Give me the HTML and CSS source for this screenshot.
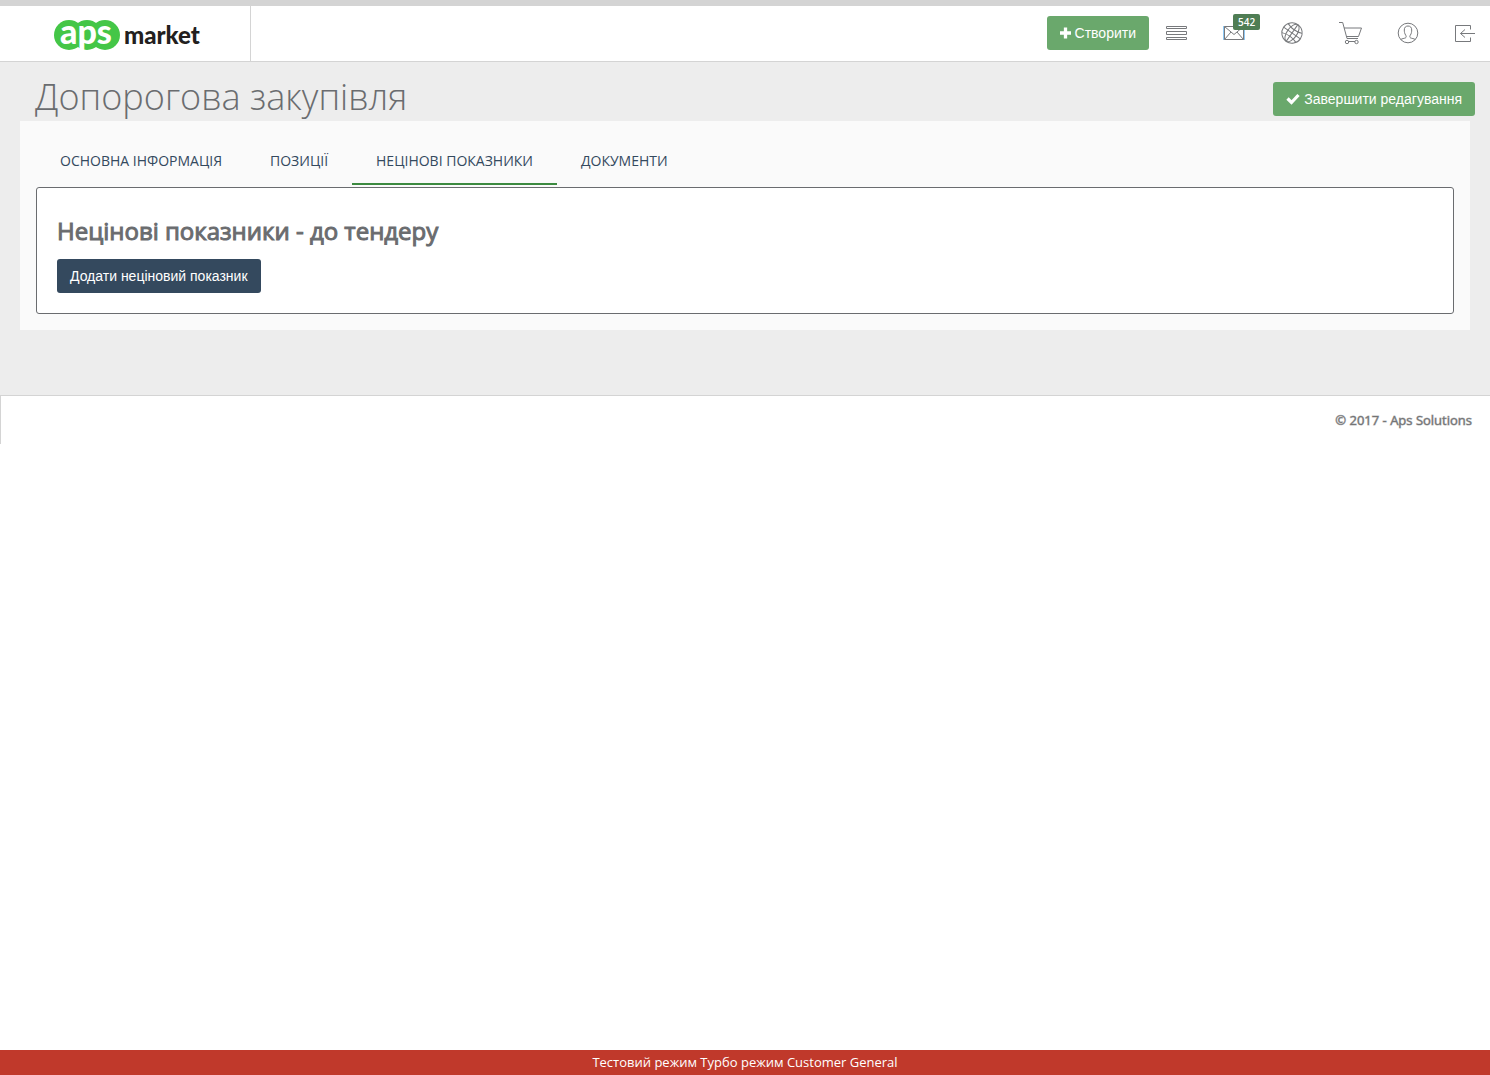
FILE: index.html
```html
<!DOCTYPE html>
<html lang="uk">
<head>
<meta charset="utf-8">
<title>Допорогова закупівля</title>
<link rel="stylesheet" href="styles.css">
</head>
<body>
<header class="header">
  <a class="brand" href="#" aria-label="aps market">
    <svg class="logo" width="150" height="48" viewBox="0 -9 150 48">
      <g fill="#44c647"><circle cx="17" cy="17" r="15"/><circle cx="35" cy="17" r="15"/><circle cx="53" cy="17" r="15"/></g>
      <text class="logo-aps" x="8" y="26">aps</text>
      <text class="logo-market" x="72" y="26">market</text>
    </svg>
  </a>
  <nav class="tools">
    <button class="btn btn-green" type="button"><svg width="11" height="12" viewBox="0 0 12 12"><path d="M4.2 0h3.6v4.2H12v3.6H7.8V12H4.2V7.8H0V4.2h4.2z" fill="#fff"/></svg> Створити</button>
    <a class="tool" href="#" aria-label="Список">
      <svg width="24" height="24" viewBox="0 0 24 24"><path d="M2.5 5.500h20v2h-20zM2.500 10.500h20v3h-20zM2.500 16.500h20v2h-20z"/></svg>
    </a>
    <a class="tool" href="#" aria-label="Повідомлення">
      <svg width="24" height="24" viewBox="0 0 24 24"><path class="mail-edge" d="M1.500 5v14M22.500 5v14"/><path d="M2.500 5.500h19v13h-19zM2.500 5.500l9.500 8 9.500-8M2.500 18.500l6.500-7.500M21.500 18.500L15 11"/></svg>
      <span class="badge">542</span>
    </a>
    <a class="tool" href="#" aria-label="Мова">
      <svg width="24" height="24" viewBox="0 0 24 24"><g transform="rotate(35 12 12)"><circle cx="12" cy="12" r="10.200"/><ellipse cx="12" cy="12" rx="5" ry="10.200"/><path d="M12 1.800v20.400M1.800 12h20.400M3.500 6.500c5 2 12 2 17 0M3.500 17.500c5-2 12-2 17 0"/></g></svg>
    </a>
    <a class="tool" href="#" aria-label="Кошик">
      <svg width="24" height="24" viewBox="0 0 24 24"><path d="M1 1.500h3.700L9 17.500h11M6 7h17.500l-3 8.500H8.500"/><circle cx="9" cy="21" r="1.700"/><circle cx="18.500" cy="21" r="1.700"/><path d="M10.500 20.500H17"/></svg>
    </a>
    <a class="tool" href="#" aria-label="Профіль">
      <svg width="24" height="24" viewBox="0 0 24 24"><circle cx="12" cy="12" r="9.800"/><path d="M4.800 18.500c1.200-.9 3.500-1.100 4.500-1.500 1.200-.5 1-2 .4-2.800C8.500 12.500 8.300 10.500 8.300 9c0-2.500 1.300-4 3.700-4s3.700 1.500 3.700 4c0 1.500-.2 3.500-1.400 5.200-.6.8-.8 2.300.4 2.800 1 .4 3.300.6 4.500 1.500"/></svg>
    </a>
    <a class="tool" href="#" aria-label="Вийти">
      <svg width="24" height="24" viewBox="0 0 24 24"><path d="M16.500 8.500v-4h-15v16h15v-4M21 12.500H6.500M11 8.500l-4.500 4 4.500 4"/></svg>
    </a>
  </nav>
</header>
<main class="page">
  <div class="page-head">
    <h1 class="title">Допорогова закупівля</h1>
    <button class="btn btn-green" type="button"><svg width="14" height="12" viewBox="0 0 14 12"><path d="M1.500 5.500l4 4L12.500 2" fill="none" stroke="#fff" stroke-width="3.200"/></svg> Завершити редагування</button>
  </div>
  <div class="panel">
    <nav class="tabs">
      <a class="tab" href="#">ОСНОВНА ІНФОРМАЦІЯ</a>
      <a class="tab" href="#">ПОЗИЦІЇ</a>
      <a class="tab tab-active" href="#" aria-current="page">НЕЦІНОВІ ПОКАЗНИКИ</a>
      <a class="tab" href="#">ДОКУМЕНТИ</a>
    </nav>
    <section class="box">
      <h2 class="subtitle">Нецінові показники - до тендеру</h2>
      <button class="btn btn-dark" type="button">Додати неціновий показник</button>
    </section>
  </div>
</main>
<footer class="footer">© 2017 - Aps Solutions</footer>
<div class="mode-bar">Тестовий режим Турбо режим Customer General</div>
</body>
</html>
```
FILE: styles.css
```css
* { box-sizing: border-box; }
body {
  margin: 0;
  background: #fff;
  color: #6a6c6f;
  font: 13px/18px "Open Sans", sans-serif;
}
.header {
  display: flex;
  justify-content: space-between;
  height: 62px;
  border-top: 6px solid #d4d4d4;
  border-bottom: 1px solid #d4d4d4;
}
.brand {
  display: flex;
  justify-content: center;
  width: 251px;
  padding-top: 3px;
  border-right: 1px solid #d4d4d4;
}
.logo { margin-left: 4px; }
.logo-aps { font: 900 34px Lato, sans-serif; fill: #fff; }
.logo-market { font: 900 24px Lato, sans-serif; fill: #231f20; }
.tools {
  display: flex;
  align-items: center;
  padding: 0 12px 2px 0;
}
.tool {
  position: relative;
  display: flex;
  margin-left: 34px;
}
.btn + .tool { margin-left: 15px; }
.tool svg {
  fill: none;
  stroke: #77797c;
  stroke-width: 1;
}
.tool .mail-edge { stroke: #8ec8f4; }
.badge {
  position: absolute;
  top: -7px;
  left: 11px;
  padding: 0 5px;
  border-radius: 2px;
  background: #4f7d54;
  color: #fff;
  font-size: 10px;
  font-weight: 600;
  line-height: 16px;
}
.btn {
  height: 34px;
  padding: 0 13px;
  border: 0;
  border-radius: 3px;
  color: #fff;
  font: 14px/20px "Liberation Sans", Arial, sans-serif;
  white-space: nowrap;
}
.btn svg { vertical-align: -1px; }
.btn-green { background: #6aa86c; }
.btn-dark { background: #34495e; }
.page {
  padding: 13px 20px 65px;
  background: #ededed;
}
.page-head {
  display: flex;
  justify-content: space-between;
  align-items: flex-start;
  height: 46px;
  padding-left: 15px;
}
.page-head .btn { margin: 7px -5px 0 0; }
.title {
  margin: 0;
  font-size: 36px;
  font-weight: 300;
  line-height: 44px;
}
.panel {
  padding: 16px;
  background: #fafafa;
}
.tabs {
  display: flex;
  margin-bottom: 2px;
}
.tab {
  padding: 15px 24px 13px;
  border-bottom: 2px solid transparent;
  color: #34495e;
  font-size: 14px;
  line-height: 18px;
  text-decoration: none;
}
.tab-active { border-color: #3c8a40; }
.box {
  padding: 26px 20px 20px;
  border: 1px solid #6a6c6f;
  border-radius: 3px;
  background: #fff;
}
.subtitle {
  margin: 0 0 11px;
  font-size: 24px;
  font-weight: 400;
  line-height: 34px;
  -webkit-text-stroke: 1px #6a6c6f;
}
.footer {
  height: 49px;
  padding: 15px 18px;
  border-top: 1px solid #d4d4d4;
  border-left: 1px solid #d4d4d4;
  text-align: right;
  -webkit-text-stroke: 1px #7c7c7c88;
}
.mode-bar {
  position: fixed;
  right: 0;
  bottom: 0;
  left: 0;
  background: #c0392b;
  color: #fff;
  line-height: 25px;
  text-align: center;
}
```
